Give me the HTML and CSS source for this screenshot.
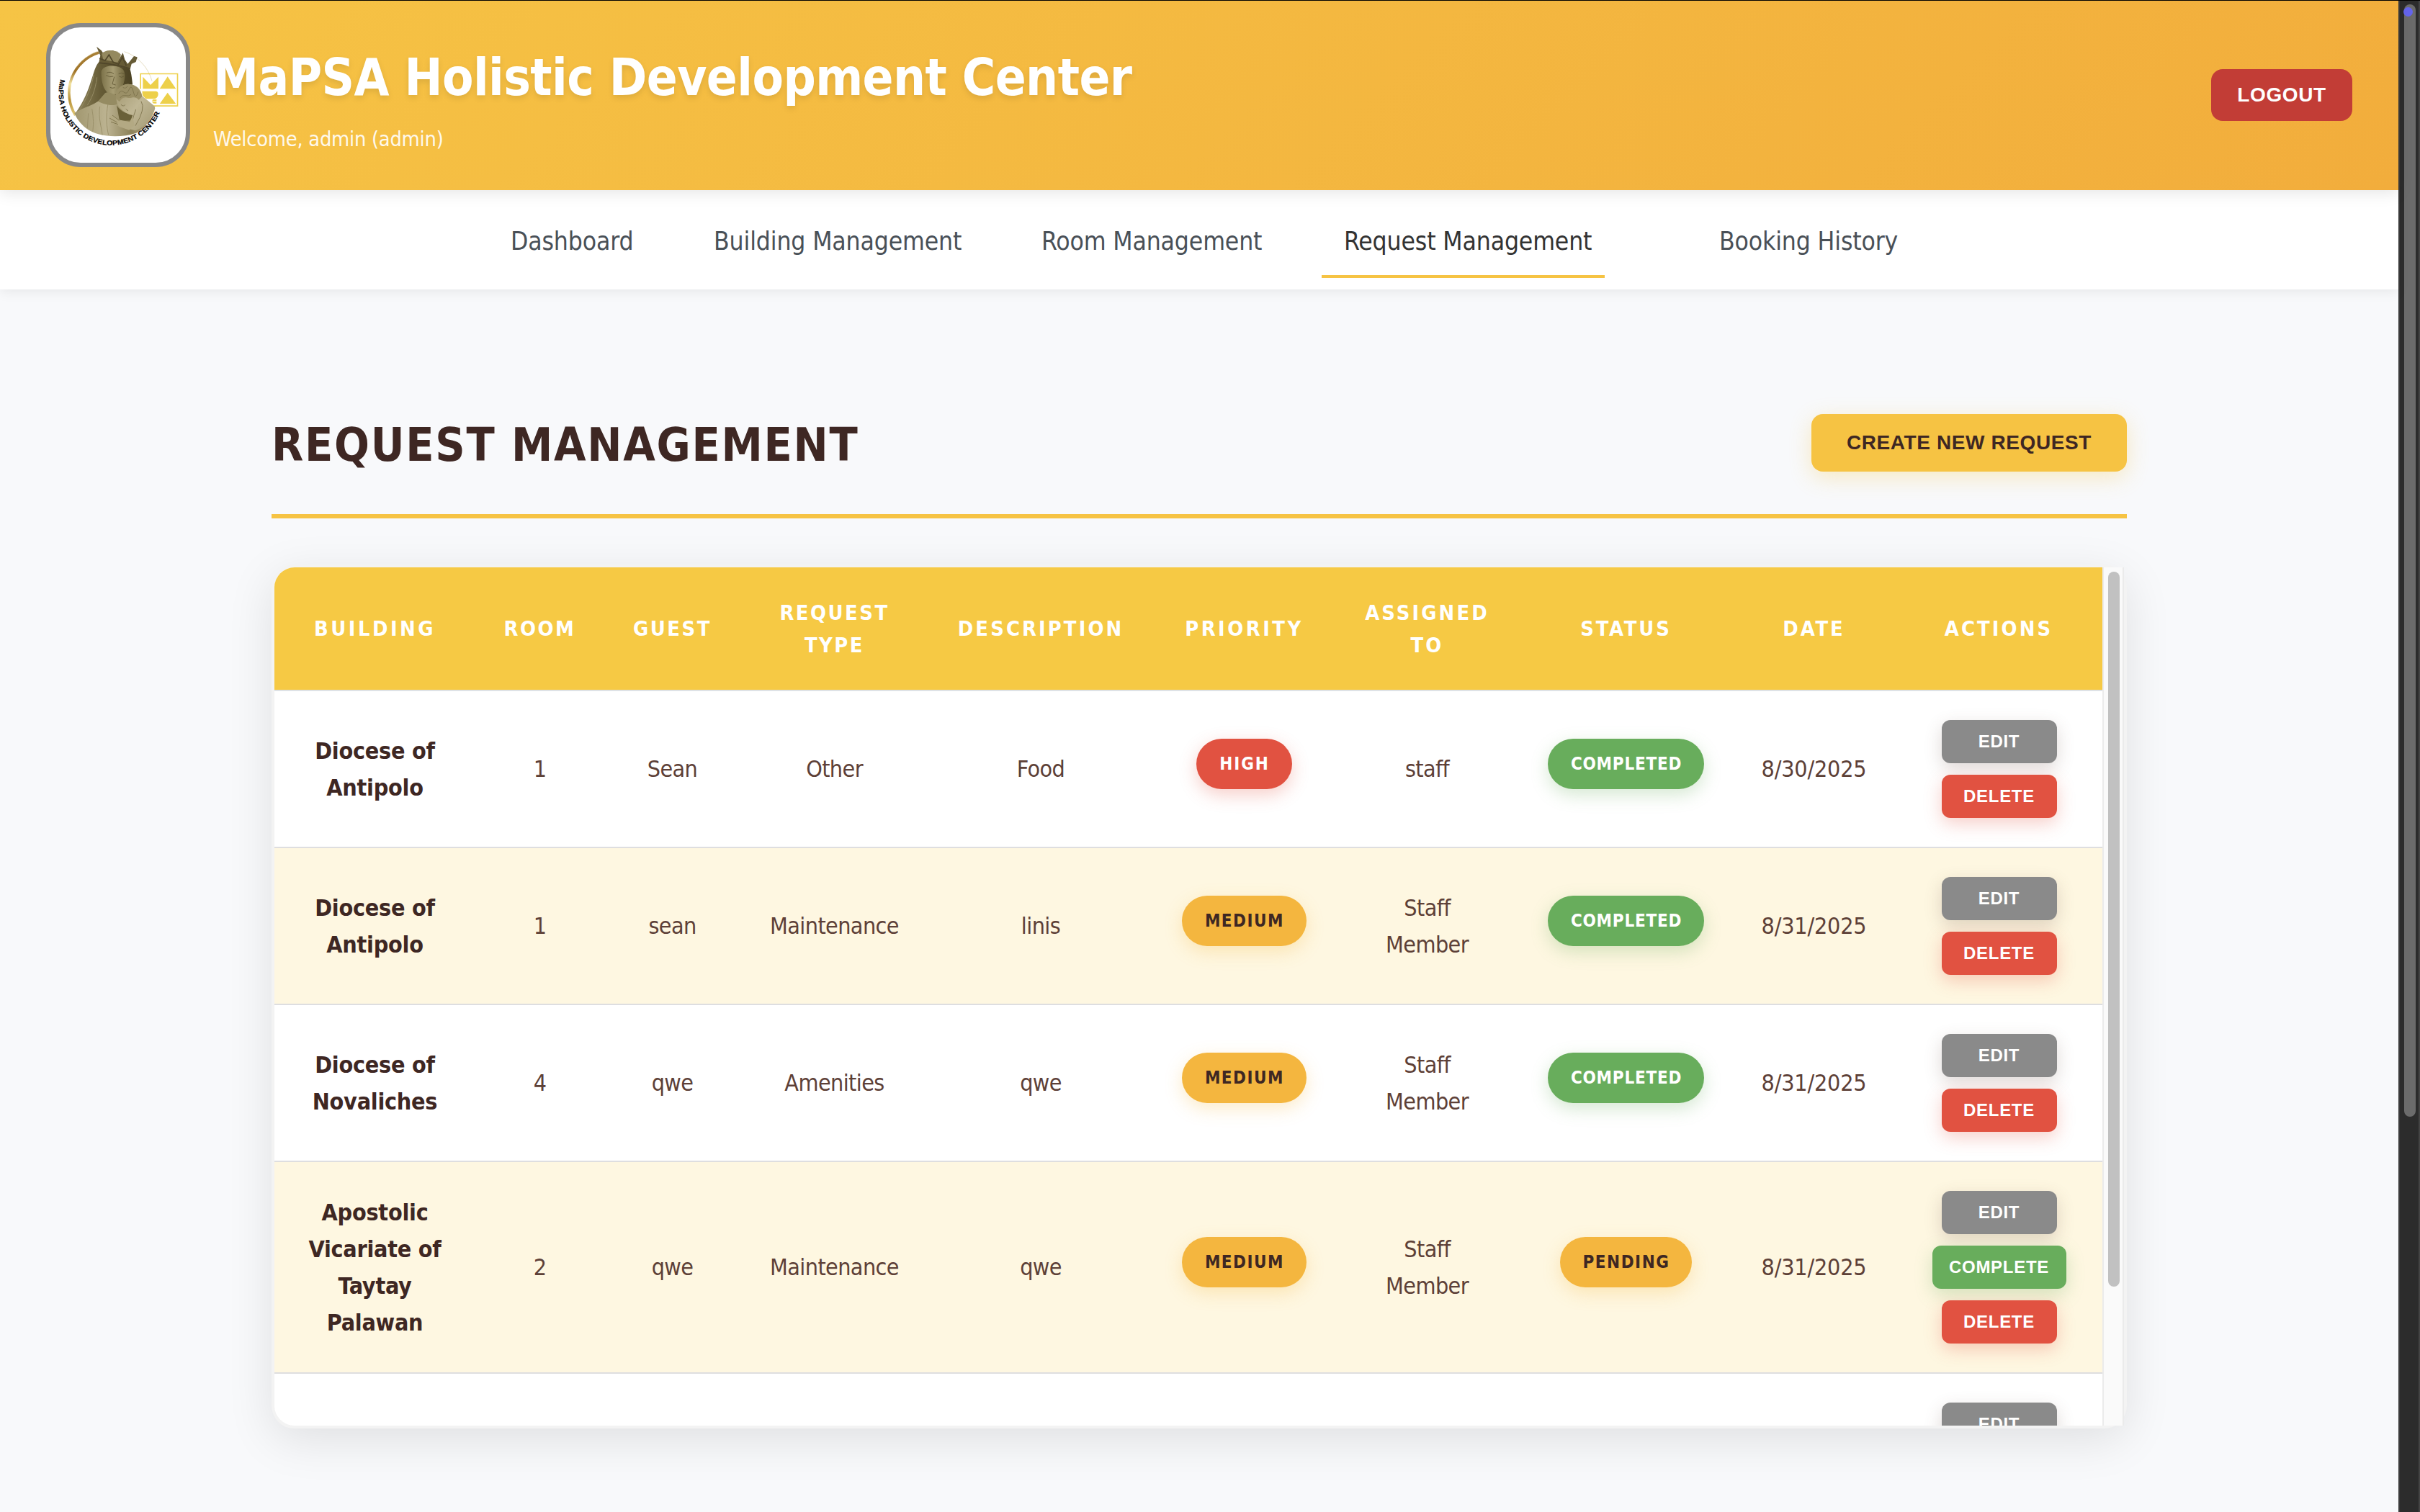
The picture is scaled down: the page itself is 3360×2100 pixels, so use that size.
FILE: index.html
```html
<!DOCTYPE html>
<html lang="en">
<head>
<meta charset="utf-8">
<title>MaPSA Holistic Development Center</title>
<link rel="stylesheet" href="styles.css">
</head>
<body>
<div class="page">
  <header class="topbar">
    <div class="logo">
      <svg viewBox="42 42 564 564" role="img" aria-label="MaPSA logo">
        <defs>
          <linearGradient id="gold" x1="0" y1="0" x2="0" y2="1">
            <stop offset="0" stop-color="#a87f35"/><stop offset=".3" stop-color="#a07428"/><stop offset=".5" stop-color="#f3e3a0"/><stop offset=".75" stop-color="#b99238"/><stop offset="1" stop-color="#e0c878"/>
          </linearGradient>
          <linearGradient id="veil" x1="0" y1="0" x2="1" y2="0">
            <stop offset="0" stop-color="#8f855c"/><stop offset=".45" stop-color="#655b36"/><stop offset="1" stop-color="#4b4223"/>
          </linearGradient>
          <linearGradient id="robe" x1="0" y1="0" x2="1" y2="0">
            <stop offset="0" stop-color="#a1976f"/><stop offset=".4" stop-color="#bcb391"/><stop offset=".7" stop-color="#8d8259"/><stop offset="1" stop-color="#b5ab87"/>
          </linearGradient>
          <linearGradient id="face" x1="0" y1="0" x2="1" y2="0">
            <stop offset="0" stop-color="#7c7249"/><stop offset=".5" stop-color="#a79d74"/><stop offset="1" stop-color="#70663e"/>
          </linearGradient>
          <linearGradient id="child" x1="0" y1="0" x2="1" y2="1">
            <stop offset="0" stop-color="#a0956d"/><stop offset=".5" stop-color="#c0b795"/><stop offset="1" stop-color="#a29872"/>
          </linearGradient>
          <path id="arc" d="M84.6 257.8A218 218 0 0 0 497.8 394.9"/>
        </defs>
        <path d="M350 143A180 180 0 0 1 465 265" fill="none" stroke="#d8cba2" stroke-width="2"/>
        <path d="M244 147A176 176 0 0 0 146 408" fill="none" stroke="url(#gold)" stroke-width="11"/>
        <path d="M236 143A188 188 0 0 0 150 208" fill="none" stroke="#cdb880" stroke-width="2"/>
        <path d="M248 182C228 200 222 235 208 275C192 325 168 370 144 402C155 400 180 380 200 372L350 390L384 278C380 240 376 212 364 196Z" fill="url(#veil)"/>
        <path d="M222 240C214 290 190 345 166 382M236 250C228 310 212 340 196 366" fill="none" stroke="#968c65" stroke-width="3"/>
        <path d="M142 400C165 380 205 374 240 350C265 335 280 330 320 345L420 372L478 378C470 415 440 460 400 482C330 505 240 500 190 462C165 442 150 420 142 400Z" fill="url(#robe)"/>
        <path d="M215 382C222 420 222 450 218 476M248 372C240 420 256 460 258 490M282 360C272 410 276 460 284 490M200 400L196 462" fill="none" stroke="#9b916b" stroke-width="3"/>
        <path d="M318 366C330 386 350 402 388 406L382 430L330 432Z" fill="#6a6038"/>
        <path d="M254 224C262 204 292 198 326 206C350 214 356 232 350 264C342 300 322 326 298 324C270 316 252 280 254 224Z" fill="url(#face)"/>
        <path d="M266 320C280 300 310 328 318 322L320 362C296 372 258 360 240 350Z" fill="#958b62"/>
        <path d="M274 242Q290 252 304 246M328 246Q338 254 348 246M276 232Q292 224 306 236M326 236Q338 228 350 236M308 248L300 278L314 282M290 292Q300 298 310 293" fill="none" stroke="#5f5633" stroke-width="2.5"/>
        <path d="M244 188L250 160L234 122L254 138L268 158L288 140L304 138L316 166L324 180L344 148L352 176L364 194L390 162L404 166L398 186L380 194L374 216L330 206L286 198Z" fill="#665b36"/>
        <path d="M256 152Q268 138 290 138Q324 138 336 156L322 188L262 176Z" fill="#94895f"/>
        <path d="M246 172L270 180L286 156L304 188L326 196L342 166L358 202M246 190Q310 194 374 214" fill="none" stroke="#50462a" stroke-width="5"/>
        <path d="M316 330C312 302 336 280 366 278C400 280 420 298 424 328L478 372C470 420 440 456 396 472L372 466L384 408C350 402 314 372 316 330Z" fill="url(#child)"/>
        <path d="M316 340C310 300 340 278 366 278C402 280 420 306 424 330L410 344C394 326 380 338 366 336C350 330 338 336 330 352Z" fill="#9b9067"/>
        <path d="M326 318Q336 300 348 312T370 300T388 312T408 310M332 336Q340 322 354 326T378 322M344 292Q356 300 364 286" fill="none" stroke="#80764f" stroke-width="3"/>
        <path d="M336 364Q346 374 354 364M356 382L366 390M398 384Q388 410 384 430M420 350Q440 380 396 452" fill="none" stroke="#857b55" stroke-width="3"/>
        <path d="M288 412C300 410 310 412 322 426L372 436L384 412L392 450L370 470L330 456L298 436Z" fill="#b3a983"/>
        <path d="M300 408L328 430M288 420L320 438M294 436L324 446" stroke="#817750" stroke-width="3"/>
        <g fill="#edd04a">
          <path fill-rule="evenodd" d="M415 233H574V372H478L470 367H569V238H420V300L415 296Z"/>
          <path d="M427 248L459 282L492 248V298H427ZM530 247L565 298H497ZM530 314L565 361H497ZM424 308H482Q492 310 491 322Q490 336 476 340H440L426 326ZM468 343H484V349H466ZM464 352H484V359H472Z"/>
        </g>
        <text class="logo-text"><textPath href="#arc" textLength="658" lengthAdjust="spacingAndGlyphs">MaPSA HOLISTIC DEVELOPMENT CENTER</textPath></text>
      </svg>
    </div>
    <div class="brand">
      <h1>MaPSA Holistic Development Center</h1>
      <p>Welcome, admin (admin)</p>
    </div>
    <button class="logout">LOGOUT</button>
  </header>
  <nav class="nav">
    <a>Dashboard</a>
    <a>Building Management</a>
    <a>Room Management</a>
    <a class="active">Request Management</a>
    <a>Booking History</a>
  </nav>
  <main class="main">
    <div class="page-head">
      <h2>REQUEST MANAGEMENT</h2>
      <button class="create">CREATE NEW REQUEST</button>
    </div>
    <section class="card">
      <div class="table-wrap">
        <table>
          <colgroup><col class="c1"><col class="c2"><col class="c3"><col class="c4"><col class="c5"><col class="c6"><col class="c7"><col class="c8"><col class="c9"><col class="c10"></colgroup>
          <thead>
            <tr><th>BUILDING</th><th>ROOM</th><th>GUEST</th><th>REQUEST<br>TYPE</th><th>DESCRIPTION</th><th>PRIORITY</th><th>ASSIGNED<br>TO</th><th>STATUS</th><th>DATE</th><th>ACTIONS</th></tr>
          </thead>
          <tbody>
            <tr><td class="b">Diocese of<br>Antipolo</td><td>1</td><td>Sean</td><td>Other</td><td>Food</td><td><span class="badge red">HIGH</span></td><td>staff</td><td><span class="badge green">COMPLETED</span></td><td class="date">8/30/2025</td><td><div class="acts"><button class="edit">EDIT</button><button class="del">DELETE</button></div></td></tr>
            <tr><td class="b">Diocese of<br>Antipolo</td><td>1</td><td>sean</td><td>Maintenance</td><td>linis</td><td><span class="badge amber">MEDIUM</span></td><td>Staff<br>Member</td><td><span class="badge green">COMPLETED</span></td><td class="date">8/31/2025</td><td><div class="acts"><button class="edit">EDIT</button><button class="del">DELETE</button></div></td></tr>
            <tr><td class="b">Diocese of<br>Novaliches</td><td>4</td><td>qwe</td><td>Amenities</td><td>qwe</td><td><span class="badge amber">MEDIUM</span></td><td>Staff<br>Member</td><td><span class="badge green">COMPLETED</span></td><td class="date">8/31/2025</td><td><div class="acts"><button class="edit">EDIT</button><button class="del">DELETE</button></div></td></tr>
            <tr><td class="b">Apostolic<br>Vicariate of<br>Taytay<br>Palawan</td><td>2</td><td>qwe</td><td>Maintenance</td><td>qwe</td><td><span class="badge amber">MEDIUM</span></td><td>Staff<br>Member</td><td><span class="badge amber">PENDING</span></td><td class="date">8/31/2025</td><td><div class="acts"><button class="edit">EDIT</button><button class="done">COMPLETE</button><button class="del">DELETE</button></div></td></tr>
            <tr><td></td><td></td><td></td><td></td><td></td><td></td><td></td><td></td><td></td><td><div class="acts"><button class="edit">EDIT</button></div></td></tr>
          </tbody>
        </table>
      </div>
      <div class="track"><div class="thumb"></div></div>
    </section>
  </main>
</div>
<aside class="scrollbar"><div class="bar"><span class="dot"></span></div></aside>
</body>
</html>
```
FILE: styles.css
```css
* { box-sizing: border-box; margin: 0; padding: 0; }
html, body { width: 3360px; height: 2100px; overflow: hidden; }
body {
  display: flex;
  border-top: 1px solid #000;
  background: #f8f9fb;
  font-family: "DejaVu Sans Condensed", "DejaVu Sans", sans-serif;
  font-stretch: condensed;
  color: #5d4037;
}
button { border: 0; font-family: "Liberation Sans", Arial, sans-serif; font-weight: 700; }
.page { width: 3330px; flex: none; }

/* header */
.topbar {
  position: relative;
  z-index: 2;
  display: flex;
  align-items: flex-start;
  height: 263px;
  padding: 31px 64px;
  background: linear-gradient(135deg, #f6c445 0%, #f2ad3c 100%);
  box-shadow: 0 4px 20px rgba(0, 0, 0, .1);
}
.logo {
  flex: none;
  width: 200px;
  height: 200px;
  border: 6px solid #888;
  border-radius: 48px;
  background: #fff;
  overflow: hidden;
}
.logo svg { display: block; width: 188px; height: 188px; }
.logo-text { font: 700 28px "Liberation Sans", Arial, sans-serif; fill: #000; stroke: #000; stroke-width: .6px; }
.brand { margin-left: 32px; padding-top: 41px; color: #fff; white-space: nowrap; }
.brand h1 { font-size: 70.4px; line-height: 70.4px; letter-spacing: -.55px; text-shadow: 0 4px 8px rgba(0, 0, 0, .1); }
.brand p { margin-top: 36px; font-size: 28.8px; line-height: 28.8px; letter-spacing: -.28px; opacity: .9; }
.logout {
  width: 196px;
  height: 72px;
  margin: 64px 0 0 auto;
  border-radius: 16px;
  background: #c23d36;
  color: #fff;
  font-size: 28px;
  letter-spacing: .6px;
}

/* navigation */
.nav {
  position: relative;
  z-index: 1;
  display: flex;
  height: 138px;
  padding: 44px 0 0 709px;
  background: #fff;
  box-shadow: 0 4px 16px rgba(0, 0, 0, .07);
}
.nav a { width: 282px; height: 78px; font-size: 35.2px; line-height: 53px; letter-spacing: -.15px; color: #495057; white-space: nowrap; }
.nav a:nth-child(2) { width: 455px; }
.nav a:nth-child(3) { width: 389px; }
.nav a.active { width: 393px; margin: 0 159px 0 0; padding-left: 31px; border-bottom: 4px solid #f6c343; color: #333; }

/* page heading */
.main { padding: 173px 377px 0; }
.page-head { display: flex; justify-content: space-between; align-items: flex-start; height: 145px; border-bottom: 6px solid #f6c343; }
.page-head h2 { margin-top: 11px; font-size: 64px; line-height: 64px; letter-spacing: 1.7px; color: #3e2723; white-space: nowrap; }
.create {
  width: 438px;
  height: 80px;
  border-radius: 16px;
  background: #f6c343;
  box-shadow: 0 8px 30px rgba(246, 195, 67, .3);
  color: #3e2723;
  font-size: 28px;
  letter-spacing: .6px;
}

/* request table */
.card {
  display: flex;
  height: 1200px;
  margin-top: 64px;
  border: 4px solid #f3f3f3;
  border-radius: 32px;
  background: #fff;
  box-shadow: 0 16px 64px rgba(0, 0, 0, .1);
}
.table-wrap { width: 2538px; flex: none; overflow: hidden; border-radius: 28px 0 0 28px; }
.track { width: 30px; flex: none; padding: 6px 4px 0 6px; border: solid #ebebeb; border-width: 0 2px; background: #fafafa; }
.thumb { width: 16px; height: 993px; border-radius: 8px; background: #c1c1c1; }
table { width: 2538px; table-layout: fixed; border-collapse: separate; border-spacing: 0; text-align: center; }
.c1 { width: 278px; } .c2 { width: 180px; } .c3 { width: 188px; } .c4 { width: 262px; } .c5 { width: 311px; }
.c6 { width: 254px; } .c7 { width: 254px; } .c8 { width: 298px; } .c9 { width: 224px; } .c10 { width: 289px; }
th { height: 172px; padding: 1px 0 0 1px; border-bottom: 2px solid #dee2e6; background: #f6c944; color: #fff; font-size: 28.8px; line-height: 45px; letter-spacing: 2.9px; }
th:nth-child(1), th:nth-child(6) { letter-spacing: 3.5px; }
th:nth-child(2), th:nth-child(3), th:nth-child(4) { letter-spacing: 2.5px; }
th:nth-child(5), th:nth-child(7), th:nth-child(10) { letter-spacing: 3.1px; }
td { height: 218px; padding: 2px 0 0 1px; border-bottom: 2px solid #dedee0; font-size: 32px; line-height: 51.2px; letter-spacing: -.6px; vertical-align: middle; }
tbody tr:nth-child(even) td { background: #fef7e1; }
td.b { color: #3e2723; font-weight: 700; letter-spacing: -.25px; }
td.date { letter-spacing: -.2px; }
td:last-child { padding-top: 0; padding-left: 2px; }
tr:nth-child(4) td { height: 294px; }
tr:nth-child(5) td:last-child { padding-top: 40px; vertical-align: top; }
.badge {
  display: inline-block;
  position: relative;
  top: -8px;
  height: 70px;
  padding: 0 31px 0 32px;
  border-radius: 35px;
  font-size: 24px;
  font-weight: 700;
  line-height: 70px;
  letter-spacing: .6px;
}
.red { background: #e15241; color: #fff; box-shadow: 0 8px 24px rgba(225, 82, 65, .28); letter-spacing: 1.9px; }
.green { background: #68ad5c; color: #fff; box-shadow: 0 8px 24px rgba(104, 173, 92, .28); letter-spacing: .75px; }
.amber { background: #f4b63f; color: #3e2723; box-shadow: 0 8px 24px rgba(244, 182, 63, .28); letter-spacing: 1.5px; }
.acts { display: flex; flex-direction: column; align-items: center; gap: 16px; }
.acts button { width: 160px; height: 60px; border-radius: 12px; color: #fff; font-size: 24px; letter-spacing: .7px; }
.acts .edit { background: #8a8a8a; box-shadow: 0 8px 24px rgba(93, 64, 55, .2); }
.acts .del { background: #e15241; box-shadow: 0 8px 24px rgba(225, 82, 65, .28); }
.acts .done { width: 186px; background: #68ad5c; box-shadow: 0 8px 24px rgba(104, 173, 92, .28); }

/* window scrollbar */
.scrollbar { width: 30px; flex: none; padding: 5px 4px 0 6px; border-left: 2px solid #3b3b3b; border-right: 2px solid #444; background: #2c2c2c; }
.bar { position: relative; width: 16px; height: 1545px; border-radius: 8px; background: #6b6b6b; }
.dot { position: absolute; left: -1px; top: 4px; width: 13px; height: 13px; border-radius: 50%; background: #6464ec; }
```
